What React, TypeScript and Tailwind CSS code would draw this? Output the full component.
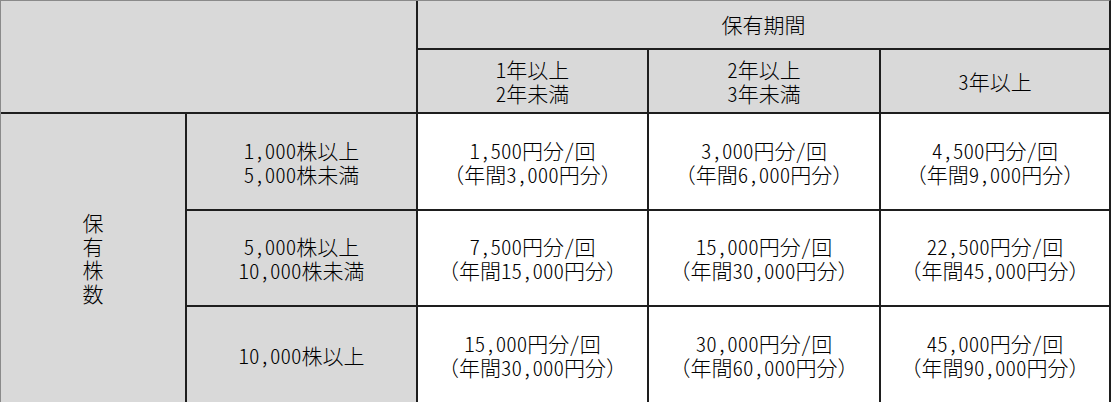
const rows = [
  {
    label: ["1,000株以上", "5,000株未満"],
    cells: [
      ["1,500円分/回", "（年間3,000円分）"],
      ["3,000円分/回", "（年間6,000円分）"],
      ["4,500円分/回", "（年間9,000円分）"],
    ],
  },
  {
    label: ["5,000株以上", "10,000株未満"],
    cells: [
      ["7,500円分/回", "（年間15,000円分）"],
      ["15,000円分/回", "（年間30,000円分）"],
      ["22,500円分/回", "（年間45,000円分）"],
    ],
  },
  {
    label: ["10,000株以上"],
    cells: [
      ["15,000円分/回", "（年間30,000円分）"],
      ["30,000円分/回", "（年間60,000円分）"],
      ["45,000円分/回", "（年間90,000円分）"],
    ],
  },
];

const periods = [["1年以上", "2年未満"], ["2年以上", "3年未満"], ["3年以上"]];

// half-width digits, like the original MS Gothic output
function Text({ s }: { s: string }) {
  const parts = s.split(/([\x20-\x7e]+)/).filter(Boolean);
  return (
    <span>
      {parts.map((p, i) =>
        /^[\x20-\x7e]+$/.test(p) ? (
          <span key={i} className="[font-feature-settings:'hwid']">
            {p}
          </span>
        ) : (
          <span key={i}>{p}</span>
        )
      )}
    </span>
  );
}

function Lines({ lines }: { lines: string[] }) {
  return (
    <div className="flex flex-col items-center leading-[24px]">
      {lines.map((l) => (
        <Text key={l} s={l} />
      ))}
    </div>
  );
}

export default function App() {
  return (
    <div className="w-[1111px] h-[402px] overflow-hidden bg-white text-[21px] text-black font-light font-['Noto_Sans_CJK_JP','Noto_Sans',sans-serif]">
      <div className="grid grid-cols-[184px_229px_229px_230px_228px] grid-rows-[47px_62px_95px_94px_95px] gap-[2px] bg-[#1e1e1e] border-t border-l border-[#8a8a8a] border-r-2 border-r-[#1e1e1e]">
        <div className="col-span-2 row-span-2 bg-[#d9d9d9]" />
        <div className="col-span-3 bg-[#d9d9d9] flex items-center justify-center">保有期間</div>
        {periods.map((p, i) => (
          <div key={i} className="bg-[#d9d9d9] flex items-center justify-center">
            <Lines lines={p} />
          </div>
        ))}
        <div className="row-span-3 bg-[#d9d9d9] flex items-center justify-center">
          <p className="text-center leading-[23.5px]">
            保<br />有<br />株<br />数
          </p>
        </div>
        {rows.map((r, i) => (
          <div key={i} className="contents">
            <div className="bg-[#d9d9d9] flex items-center justify-center">
              <Lines lines={r.label} />
            </div>
            {r.cells.map((c, j) => (
              <div key={j} className="bg-white flex items-center justify-center">
                <Lines lines={c} />
              </div>
            ))}
          </div>
        ))}
      </div>
    </div>
  );
}
